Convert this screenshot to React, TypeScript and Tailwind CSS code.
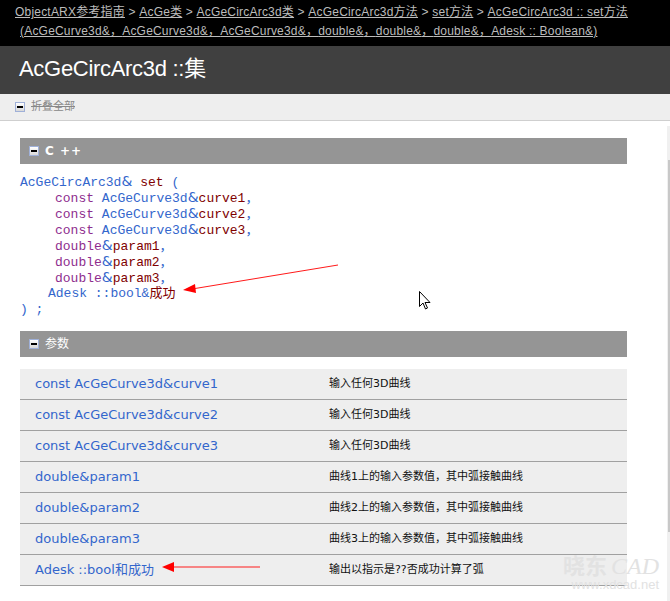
import React from 'react';

const sans = "font-['DejaVu_Sans','Noto_Sans_CJK_SC',sans-serif]";
const mono = "font-['Liberation_Mono','Noto_Sans_CJK_SC',monospace]";

const crumbs1 = ['ObjectARX参考指南', 'AcGe类', 'AcGeCircArc3d类', 'AcGeCircArc3d方法', 'set方法', 'AcGeCircArc3d :: set方法'];
const crumbs2 = ['(AcGeCurve3d&', 'AcGeCurve3d&', 'AcGeCurve3d&', 'double&', 'double&', 'double&', 'Adesk :: Boolean&)'];

const params = [
  { name: 'const AcGeCurve3d&curve1', desc: '输入任何3D曲线' },
  { name: 'const AcGeCurve3d&curve2', desc: '输入任何3D曲线' },
  { name: 'const AcGeCurve3d&curve3', desc: '输入任何3D曲线' },
  { name: 'double&param1', desc: '曲线1上的输入参数值，其中弧接触曲线' },
  { name: 'double&param2', desc: '曲线2上的输入参数值，其中弧接触曲线' },
  { name: 'double&param3', desc: '曲线3上的输入参数值，其中弧接触曲线' },
  { name: 'Adesk ::bool和成功', desc: '输出以指示是??否成功计算了弧' },
];

function Minus() {
  return (
    <span className="inline-flex w-[10px] h-[10px] items-center justify-center border border-[#9fb0d8] bg-gradient-to-b from-white to-[#d8d8d8]">
      <span className="block w-[6px] h-[2px] bg-black" />
    </span>
  );
}

function SectionHeader({ label, bold }: { label: string; bold?: boolean }) {
  return (
    <div className="h-[26px] bg-[#959595] flex items-center gap-[6px] pl-[9px]">
      <Minus />
      <span className={`text-white text-[12px] ${bold ? 'font-bold tracking-[1px]' : ''} ${sans}`}>{label}</span>
    </div>
  );
}

const B = ({ children }: { children: React.ReactNode }) => <span className="text-[#3366cc]">{children}</span>;
const P = ({ children }: { children: React.ReactNode }) => <span className="text-[#8e2d8e]">{children}</span>;
const R = ({ children }: { children: React.ReactNode }) => <span className="text-[#800000]">{children}</span>;
const Amp = () => <span className={`text-[#3366cc] text-[14px] leading-[16px] ${sans}`}>&amp;</span>;

export default function App() {
  return (
    <div className={`relative w-[670px] h-[601px] overflow-hidden bg-white flex flex-col ${sans}`}>
      {/* Breadcrumb */}
      <div className="bg-black h-[46px] pl-[15px] pt-[3px] text-[12px] leading-[19px] tracking-[0.2px] text-[#bcbcbc] font-['Liberation_Sans','Noto_Sans_CJK_SC',sans-serif]">
        <div>
          {crumbs1.map((c, i) => (
            <React.Fragment key={i}>
              {i > 0 && <span> &gt; </span>}
              <span className="underline">{c}</span>
            </React.Fragment>
          ))}
        </div>
        <div className="underline pl-[5px]">
          {crumbs2.map((c, i) => (
            <React.Fragment key={i}>
              {i > 0 && <span>，</span>}
              <span>{c}</span>
            </React.Fragment>
          ))}
        </div>
      </div>

      {/* Title */}
      <div className="bg-[#404040] h-[48px] flex items-center pl-[19px] pb-[3px]">
        <h1 className="text-white text-[22px] tracking-[-0.3px] font-['Liberation_Sans','Noto_Sans_CJK_SC',sans-serif]">AcGeCircArc3d ::集</h1>
      </div>

      {/* Collapse all */}
      <div className="bg-[#eeeeee] h-[27px] border-b border-[#cfcfcf] flex items-center gap-[6px] pl-[15px]">
        <Minus />
        <span className="text-[11px] text-[#888888] line-through">折叠全部</span>
      </div>

      <div className="flex-1 flex">
        <div className="flex-1 pl-[20px] pr-[40px] pt-[17px]">
          <SectionHeader label="C ++" bold />

          <pre className={`mt-[9px] text-[13px] leading-[16px] ${mono}`}>
            <div className="h-[16px]"><B>AcGeCircArc3d</B><Amp /> <R>set</R> <B>(</B></div>
            <div className="h-[16px] pl-[35px]"><P>const</P> <B>AcGeCurve3d</B><Amp /><R>curve1</R><B>，</B></div>
            <div className="h-[16px] pl-[35px]"><P>const</P> <B>AcGeCurve3d</B><Amp /><R>curve2</R><B>，</B></div>
            <div className="h-[16px] pl-[35px]"><P>const</P> <B>AcGeCurve3d</B><Amp /><R>curve3</R><B>，</B></div>
            <div className="h-[16px] pl-[35px]"><P>double</P><Amp /><R>param1</R><B>，</B></div>
            <div className="h-[16px] pl-[35px]"><P>double</P><Amp /><R>param2</R><B>，</B></div>
            <div className="h-[16px] pl-[35px]"><P>double</P><Amp /><R>param3</R><B>，</B></div>
            <div className="h-[16px] pl-[28px] mt-[1px]"><B>Adesk ::bool&amp;</B><R>成功</R></div>
            <div className="h-[16px]"><B>) ;</B></div>
          </pre>

          <div className="mt-[13px]">
            <SectionHeader label="参数" />
          </div>

          <div className="mt-[12px]">
            {params.map((p) => (
              <div key={p.name} className="flex h-[31px] items-center bg-[#eeeeee] border-b border-[#a0a0a0]">
                <div className="w-[309px] pl-[15px] text-[13px] text-[#3366cc]">{p.name}</div>
                <div className="text-[11px] text-[#111111]">{p.desc}</div>
              </div>
            ))}
          </div>
        </div>

        {/* Scrollbar */}
        <div className="w-[3px] mt-[5px] bg-[#f0f0f0] flex">
          <div className="ml-[1px] w-[2px] mt-[34px] h-[372px] bg-[#c8c8c8]" />
        </div>
      </div>

      {/* Annotation arrows */}
      <svg className="absolute left-0 top-0 pointer-events-none" width="670" height="601">
        <line x1="338" y1="265" x2="192" y2="289" stroke="#ff1a1a" strokeWidth="1" />
        <polygon points="183,290 195,284 196,293" fill="#ff0000" />
        <line x1="260" y1="567" x2="172" y2="567" stroke="#ff1a1a" strokeWidth="1" />
        <polygon points="162,567 174,562 174,572" fill="#ff0000" />
      </svg>

      {/* Mouse cursor */}
      <svg className="absolute left-[419px] top-[291px]" width="12" height="19" viewBox="0 0 12 19">
        <path d="M0.5 0.5 L0.5 15.5 L4 12 L6.5 18 L8.5 17 L6 11.5 L11 11.5 Z" fill="white" stroke="black" strokeWidth="1" />
      </svg>

      {/* Watermark */}
      <div className="absolute left-[563px] top-[553px] flex flex-col items-end text-[#e2e2e2]">
        <div className="flex items-baseline leading-none">
          <span className="text-[22px] font-bold font-['Noto_Sans_CJK_SC',sans-serif]">晓东</span>
          <span className="ml-[4px] text-[24px] italic font-['Liberation_Serif',serif]">CAD</span>
        </div>
        <span className="text-[13px] leading-[14px] font-['Liberation_Sans',sans-serif]">www.xdcad.net</span>
      </div>
    </div>
  );
}
